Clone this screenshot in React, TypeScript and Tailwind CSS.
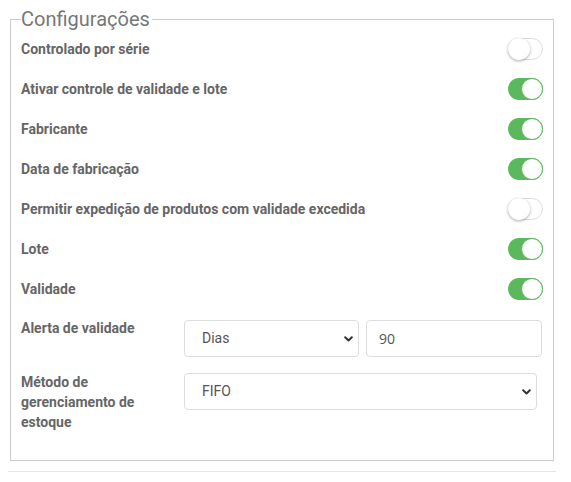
import React from "react";

const Toggle = ({ on }: { on: boolean }) =>
  on ? (
    <div className="relative w-[35px] h-[22px] rounded-full bg-[#5cb85c]">
      <div className="absolute right-0 top-0 w-[22px] h-[22px] rounded-full bg-white border border-[#5cb85c]" />
    </div>
  ) : (
    <div className="relative w-[35px] h-[22px] rounded-full bg-white border border-[#dfdfdf]">
      <div className="absolute -left-px -top-px w-[22px] h-[22px] rounded-full bg-white shadow-[0_1px_3px_rgba(0,0,0,0.35)]" />
    </div>
  );

const Chevron = () => (
  <svg width="9" height="6" viewBox="0 0 9 6" className="shrink-0">
    <path d="M1.2 1.2 L4.5 4.5 L7.8 1.2" fill="none" stroke="#333" strokeWidth="2" strokeLinecap="round" strokeLinejoin="round" />
  </svg>
);

const rows: [string, boolean][] = [
  ["Controlado por série", false],
  ["Ativar controle de validade e lote", true],
  ["Fabricante", true],
  ["Data de fabricação", true],
  ["Permitir expedição de produtos com validade excedida", false],
  ["Lote", true],
  ["Validade", true],
];

export default function App() {
  return (
    <div className="w-[571px] h-[482px] bg-white font-['Roboto',sans-serif] overflow-hidden">
      <fieldset className="mt-[7px] ml-[10px] w-[544px] border border-[#cccccc] px-[10px] pb-[28px]">
        <legend className="text-[20px] leading-6 text-[#777777] font-normal pr-[2px]">Configurações</legend>
        <div className="-mt-[2px]">
          {rows.map(([label, on]) => (
            <div key={label} className="h-10 flex items-center justify-between">
              <span className="text-[14px] font-bold text-[#666666]">{label}</span>
              <Toggle on={on} />
            </div>
          ))}
        </div>
        <div className="mt-[9px] flex items-start">
          <span className="w-[163px] shrink-0 text-[14px] leading-5 font-bold text-[#666666]">Alerta de validade</span>
          <div className="mt-[2px] w-[175px] h-[37px] rounded-[4px] border border-[#dddddd] flex items-center justify-between pl-[17px] pr-[5px] text-[14px] text-[#555555]">
            <span>Dias</span>
            <Chevron />
          </div>
          <div className="mt-[2px] ml-[7px] w-[176px] h-[37px] rounded-[4px] border border-[#dddddd] flex items-center pl-[12px] text-[14px] text-[#555555] font-['Open_Sans',sans-serif]">
            90
          </div>
        </div>
        <div className="mt-[15px] flex items-start">
          <span className="w-[163px] shrink-0 text-[14px] leading-5 font-bold text-[#666666] pr-[40px]">
            Método de gerenciamento de estoque
          </span>
          <div className="mt-[1px] w-[353px] h-[37px] rounded-[4px] border border-[#dddddd] flex items-center justify-between pl-[17px] pr-[5px] text-[14px] text-[#555555]">
            <span>FIFO</span>
            <Chevron />
          </div>
        </div>
      </fieldset>
      <div className="mt-[10px] ml-[8px] w-[548px] h-px bg-[#e5e5e5]" />
    </div>
  );
}
